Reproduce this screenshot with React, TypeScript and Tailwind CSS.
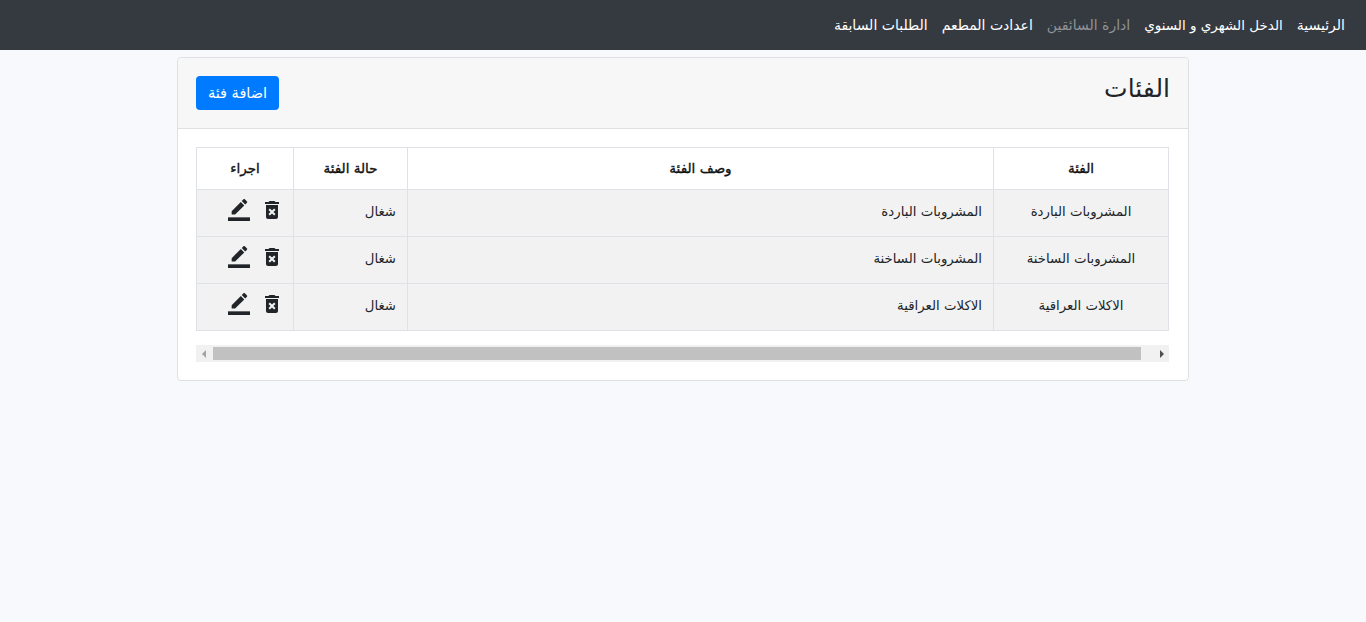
import React from "react";
import { MdDeleteForever } from "react-icons/md";

const navItems = [
  { t: "الرئيسية", cls: "text-white" },
  { t: "الدخل الشهري و السنوي", cls: "text-white text-[13.5px]" },
  { t: "ادارة السائقين", cls: "text-[#8f9296]" },
  { t: "اعدادت المطعم", cls: "text-white" },
  { t: "الطلبات السابقة", cls: "text-white" },
];

const rows = [
  ["المشروبات الباردة", "المشروبات الباردة"],
  ["المشروبات الساخنة", "المشروبات الساخنة"],
  ["الاكلات العراقية", "الاكلات العراقية"],
];

function PenIcon() {
  return (
    <svg width="22" height="22" viewBox="0 0 24 24" fill="currentColor">
      <path d="M17.75 7L14 3.25l-10 10V17h3.75l10-10zm2.96-2.96c.39-.39.39-1.02 0-1.41L18.37.29c-.39-.39-1.02-.39-1.41 0L15 2.25 18.75 6l1.96-1.96z" />
      <path d="M0 20h24v4H0z" />
    </svg>
  );
}

export default function App() {
  return (
    <div dir="rtl" className="min-h-[622px] bg-[#f8f9fc] text-[14px] text-[#212529] font-['DejaVu_Sans','Noto_Sans',sans-serif]">
      <nav className="flex h-[50px] items-center gap-[14px] bg-[#343a40] pr-[21px]">
        {navItems.map((n) => (
          <a key={n.t} className={n.cls}>{n.t}</a>
        ))}
      </nav>
      <main className="mx-auto mt-[7px] w-[1012px] rounded border border-[#dfe0e2] bg-white">
        <header className="flex h-[71px] items-center justify-between rounded-t border-b border-[#dfe0e2] bg-[#f7f7f7] px-[18px]">
          <h1 className="pb-[8px] text-[25px] font-normal">الفئات</h1>
          <button className="h-[34px] w-[83px] rounded bg-[#007bff] pt-[2px] text-[14.5px] text-white">اضافة فئة</button>
        </header>
        <section className="pb-[18px] pl-[18px] pr-[19px] pt-[18px]">
          <table className="w-[972px] table-fixed border-collapse border border-[#dee2e6] text-[13.3px]">
            <colgroup>
              <col className="w-[175px]" />
              <col className="w-[586px]" />
              <col className="w-[114px]" />
              <col className="w-[97px]" />
            </colgroup>
            <thead>
              <tr className="h-[42px] bg-white text-[13.5px]">
                <th className="border border-[#dee2e6] text-center font-normal text-[#111] [-webkit-text-stroke:0.35px_#111]">الفئة</th>
                <th className="border border-[#dee2e6] text-center font-normal text-[#111] [-webkit-text-stroke:0.35px_#111]">وصف الفئة</th>
                <th className="border border-[#dee2e6] text-center font-normal text-[#111] [-webkit-text-stroke:0.35px_#111]">حالة الفئة</th>
                <th className="border border-[#dee2e6] text-center font-normal text-[#111] [-webkit-text-stroke:0.35px_#111]">اجراء</th>
              </tr>
            </thead>
            <tbody>
              {rows.map(([a, b]) => (
                <tr key={a} className="h-[47px] bg-[#f2f2f2]">
                  <td className="border border-[#dee2e6] pb-[2px] text-center">{a}</td>
                  <td className="border border-[#dee2e6] pb-[2px] pr-[11px]">{b}</td>
                  <td className="border border-[#dee2e6] pb-[2px] pr-[11px]">شغال</td>
                  <td className="border border-[#dee2e6]">
                    <div className="flex items-center gap-[10px] pb-[7px] pr-[9px] text-[#212529]">
                      <MdDeleteForever size={24} />
                      <PenIcon />
                    </div>
                  </td>
                </tr>
              ))}
            </tbody>
          </table>
          <div dir="ltr" className="mt-[14px] flex h-[17px] w-[973px] items-center bg-[#f1f1f1]">
            <div className="flex w-[17px] justify-start pl-[6px]">
              <div className="h-0 w-0 border-y-[4px] border-r-[4px] border-y-transparent border-r-[#a3a3a3]" />
            </div>
            <div className="h-[13px] w-[928px] bg-[#c1c1c1]" />
            <div className="flex flex-1 justify-end pr-[5px]">
              <div className="h-0 w-0 border-y-[4px] border-l-[4px] border-y-transparent border-l-[#505050]" />
            </div>
          </div>
        </section>
      </main>
    </div>
  );
}
